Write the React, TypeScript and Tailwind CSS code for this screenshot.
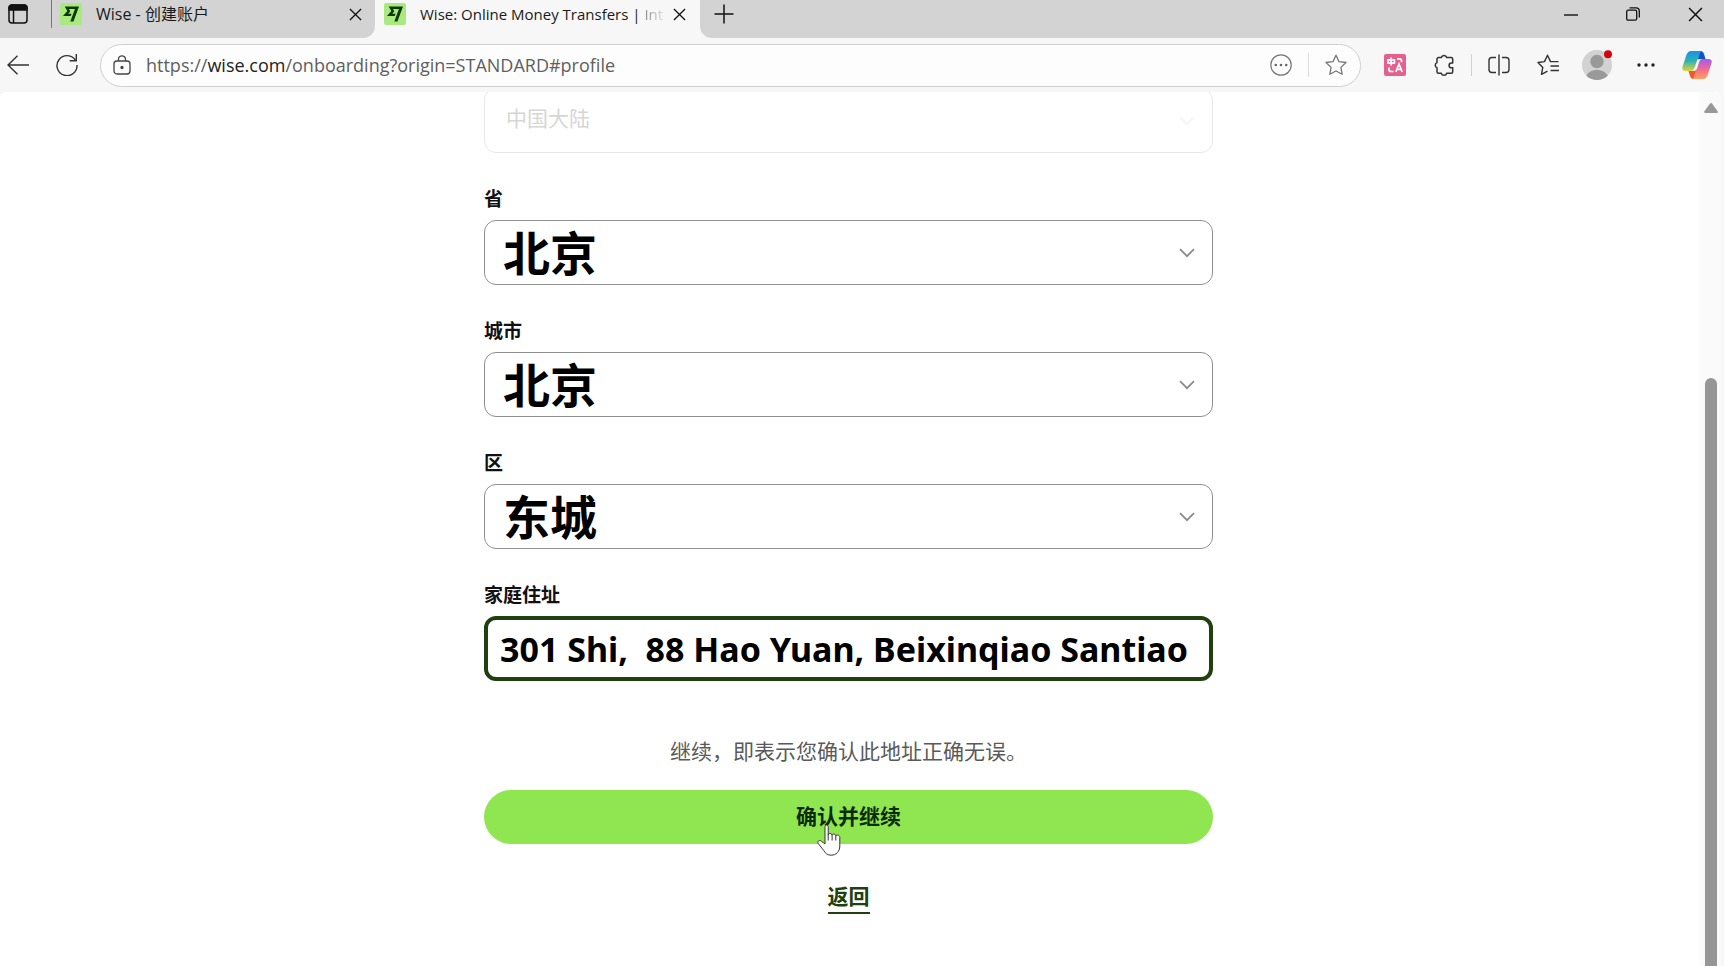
import type { ReactNode } from "react";

const WiseLogo = () => (
    <span className="flex h-[22px] w-[22px] shrink-0 items-center justify-center rounded-xs bg-[#a9e97f]">
        <svg viewBox="0 0 24 24" className="h-4 w-4" fill="#0d3a08">
            <path d="M6.488 7.469 0 15.05h11.585l1.301-3.576H7.922l3.033-3.507.01-.092L8.993 4.48h8.873l-6.878 18.925h4.706L24 .595H2.543l3.945 6.874Z" />
        </svg>
    </span>
);

const Cross = ({ size }: { size: string }) => (
    <svg viewBox="0 0 14 14" className={size} fill="none" stroke="#111" strokeWidth="1.4">
        <path d="M1 1l12 12M13 1L1 13" />
    </svg>
);

const Chevron = ({ className }: { className: string }) => (
    <svg viewBox="0 0 16 10" className={`h-[10px] w-4 ${className}`} fill="none" stroke="currentColor" strokeWidth="1.7">
        <path d="M1 1.2l7 7 7-7" />
    </svg>
);

const ToolButton = ({ label, children }: { label: string; children: ReactNode }) => (
    <button type="button" aria-label={label} className="relative flex h-10 w-12 shrink-0 items-center justify-center">
        {children}
    </button>
);

const TabStrip = () => (
    <div className="flex h-[38px] bg-[#f7f7f7] text-base text-[#1a1a1a]">
        <div className="flex w-[375px] shrink-0 rounded-br-xl bg-[#d3d3d3]">
            <div className="flex h-7 w-full items-center pl-2 pr-[13px]">
                <button type="button" aria-label="Tab actions">
                    <svg viewBox="0 0 20 20" className="h-5 w-5" fill="none" stroke="#111" strokeWidth="1.5">
                        <rect x="1" y="1" width="18" height="18" rx="3" />
                        <path d="M1 6V4a3 3 0 013-3h12a3 3 0 013 3v2z" fill="#111" />
                        <path d="M5.5 6v13" />
                    </svg>
                </button>
                <span className="ml-[23px] h-7 w-px bg-[#777]" />
                <button type="button" className="ml-2 flex flex-1 items-center gap-3.5 text-left">
                    <WiseLogo />
                    Wise - 创建账户
                </button>
                <button type="button" aria-label="Close tab">
                    <Cross size="h-[13px] w-[13px]" />
                </button>
            </div>
        </div>
        <div className="flex h-7 w-[325px] shrink-0 items-center pl-[9px] pr-[14px]">
            <button type="button" className="flex flex-1 items-center gap-3.5 text-left text-[15px]">
                <WiseLogo />
                <span className="whitespace-nowrap">
                    Wise: Online Money Transfers |{" "}
                    <span className="bg-linear-to-r from-[#8a8a8a] to-[#dedede] bg-clip-text text-transparent">Int</span>
                </span>
            </button>
            <button type="button" aria-label="Close tab">
                <Cross size="h-[13px] w-[13px]" />
            </button>
        </div>
        <div className="min-w-0 flex-1 rounded-bl-xl bg-[#d3d3d3]">
            <div className="flex h-7 items-center pl-[14px] pr-[21px]">
                <button type="button" aria-label="New tab">
                    <svg viewBox="0 0 20 20" className="h-5 w-5" fill="none" stroke="#111" strokeWidth="1.5">
                        <path d="M10 .5v19M.5 10h19" />
                    </svg>
                </button>
                <div className="ml-auto flex items-center gap-12">
                    <button type="button" aria-label="Minimize">
                        <svg viewBox="0 0 14 14" className="h-[14px] w-[14px]" stroke="#111" strokeWidth="1.4">
                            <path d="M0 8h14" />
                        </svg>
                    </button>
                    <button type="button" aria-label="Restore">
                        <svg viewBox="0 0 14 14" className="h-[14px] w-[14px]" fill="none" stroke="#111" strokeWidth="1.3">
                            <rect x=".7" y="3.2" width="10" height="10" rx="1.5" />
                            <path d="M3.5.8H10a3.3 3.3 0 013.3 3.3v6.4" />
                        </svg>
                    </button>
                    <button type="button" aria-label="Close window">
                        <Cross size="h-[15px] w-[15px]" />
                    </button>
                </div>
            </div>
        </div>
    </div>
);

const STAR = "M11 1.2l3 6.4 7 .9-5.1 4.9 1.3 6.9L11 17l-6.2 3.3 1.3-6.9L1 8.5l7-.9z";

const Toolbar = () => (
    <div className="flex h-[54px] items-center bg-[#f7f7f7] pl-[7px] pr-[3px]">
        <button type="button" aria-label="Back">
            <svg viewBox="0 0 22 20" className="h-5 w-[22px]" fill="none" stroke="#333" strokeWidth="1.4">
                <path d="M10.5.8L1 10l9.5 9.2M1 10h21" />
            </svg>
        </button>
        <button type="button" aria-label="Refresh" className="ml-[27px]">
            <svg viewBox="0 0 22 22" className="h-[22px] w-[22px]" fill="none" stroke="#333" strokeWidth="1.4">
                <path d="M19.6 6.5A10 10 0 1021 11" />
                <path d="M20.3 0v6.7h-6.6" />
            </svg>
        </button>
        <div className="ml-[22px] flex h-[43px] min-w-0 flex-1 items-center rounded-full border border-[#cfcfcf] bg-[#fdfdfd] pl-3 pr-[13px]">
            <svg viewBox="0 0 18 20" className="h-5 w-[18px] shrink-0" fill="none" stroke="#444" strokeWidth="1.3">
                <rect x="1" y="6" width="16" height="13" rx="3" />
                <path d="M5.5 6V4.3a3.5 3.5 0 017 0V6" />
                <circle cx="9" cy="12.5" r="1" fill="#444" />
            </svg>
            <button type="button" className="ml-[15px] min-w-0 flex-1 truncate text-left text-lg text-[#5f5f5f]">
                https://<span className="text-[#222]">wise.com</span>/onboarding?origin=STANDARD#profile
            </button>
            <button type="button" aria-label="More page actions">
                <svg viewBox="0 0 22 22" className="h-[22px] w-[22px]" fill="none" stroke="#777" strokeWidth="1.2">
                    <circle cx="11" cy="11" r="10.2" />
                    <g fill="#666" stroke="none">
                        <circle cx="5.8" cy="11" r="1.3" />
                        <circle cx="11" cy="11" r="1.3" />
                        <circle cx="16.2" cy="11" r="1.3" />
                    </g>
                </svg>
            </button>
            <span className="mx-4 h-6 w-px bg-[#dcdcdc]" />
            <button type="button" aria-label="Add to favorites">
                <svg viewBox="0 0 22 22" className="h-[22px] w-[22px]" fill="none" stroke="#777" strokeWidth="1.3" strokeLinejoin="round">
                    <path d={STAR} />
                </svg>
            </button>
        </div>
        <div className="ml-[10px] flex shrink-0 items-center gap-px">
            <ToolButton label="Translate">
                <svg viewBox="0 0 22 22" className="h-[22px] w-[22px]" fill="none" stroke="#fff" strokeWidth="1.7">
                    <rect width="22" height="22" rx="2" fill="#e4608f" stroke="none" />
                    <path d="M4 5.8h6.4v3.4H4zM7.2 3.5v8M13 4.8h2.5a2 2 0 012 2v1.5M5 13.5v2a2 2 0 002 2h2.5" />
                    <path d="M11.8 18l3.2-8 3.2 8M13 15.3h4" />
                </svg>
            </ToolButton>
            <ToolButton label="Extensions">
                <svg viewBox="0 0 22 24" className="h-6 w-[22px]" fill="none" stroke="#333" strokeWidth="1.5" strokeLinejoin="round">
                    <path d="M8.3 4.5a2.8 2.8 0 015.4 0h4.5a1.5 1.5 0 011.5 1.5v4h-1.2a2.4 2.4 0 000 4.8h1.2v4a1.5 1.5 0 01-1.5 1.5h-4.5a2.8 2.8 0 01-5.4 0H5.5A1.5 1.5 0 014 18.8v-4a2.8 2.8 0 010-5.2V6a1.5 1.5 0 011.5-1.5z" />
                </svg>
            </ToolButton>
            <span className="mx-0.5 h-[22px] w-px bg-[#d0d0d0]" />
            <ToolButton label="Split screen">
                <svg viewBox="0 0 22 22" className="h-[22px] w-[22px]" fill="none" stroke="#333" strokeWidth="1.4">
                    <path d="M8 3.5H4a3 3 0 00-3 3v9a3 3 0 003 3h4M14 3.5h4a3 3 0 013 3v9a3 3 0 01-3 3h-4M11 .5v21" />
                </svg>
            </ToolButton>
            <ToolButton label="Favorites">
                <svg viewBox="0 0 22 22" className="h-[22px] w-[22px]" fill="none" stroke="#333" strokeWidth="1.4" strokeLinejoin="round">
                    <path d="M10.5 17.1l-6 3.2 1.3-6.9L1 8.5l6.5-.9 3-6.4 3 6.4h8M13.5 12H22M13.5 16.5H22" />
                </svg>
            </ToolButton>
            <ToolButton label="Profile">
                <svg viewBox="0 0 30 30" className="h-[30px] w-[30px]">
                    <circle cx="15" cy="15" r="15" fill="#d2d2d2" />
                    <circle cx="15" cy="11.5" r="6.7" fill="#999" />
                    <path d="M4.2 25.4a13 13 0 0121.6 0A15 15 0 014.2 25.4z" fill="#999" />
                    <circle cx="26" cy="4.3" r="4" fill="#d9000f" />
                </svg>
            </ToolButton>
            <ToolButton label="Settings and more">
                <svg viewBox="0 0 20 4" className="h-1 w-5" fill="#222">
                    <circle cx="3" cy="2" r="1.7" />
                    <circle cx="10" cy="2" r="1.7" />
                    <circle cx="17" cy="2" r="1.7" />
                </svg>
            </ToolButton>
            <span className="w-px" />
            <ToolButton label="Copilot">
                <svg viewBox="0 0 30 28" className="h-7 w-[30px]">
                    <defs>
                        <linearGradient id="cool" x1="0" y1="0" x2="0" y2="1">
                            <stop offset="0" stopColor="#1b8fe8" />
                            <stop offset=".5" stopColor="#2cb3b8" />
                            <stop offset="1" stopColor="#e4d52c" />
                        </linearGradient>
                        <linearGradient id="warm" x1="0" y1="0" x2="0" y2="1">
                            <stop offset="0" stopColor="#a25be8" />
                            <stop offset=".5" stopColor="#f06a93" />
                            <stop offset="1" stopColor="#fba25c" />
                        </linearGradient>
                    </defs>
                    <path d="M14 0h4.5c2 0 3 1.3 3.6 3.2L23.5 8H20c-2.5 0-3.5 1.5-4.2 3.5L12 8z" fill="#1550c8" />
                    <path d="M16 28h-4.5c-2 0-3-1.3-3.6-3.2L6.5 20H10c2.5 0 3.5-1.5 4.2-3.5L18 20z" fill="#ee5a34" />
                    <path d="M18.5 0H9.2C6.5 0 5 2 4 5L.6 15.5C-.4 18.5 1 20 3.5 20H10c2 0 3-1.2 3.6-3.2l3.8-13C18 1.8 18.5.5 20 .2z" fill="url(#cool)" />
                    <path d="M11.5 28h9.3c2.7 0 4.2-2 5.2-5l3.4-10.5c1-3-.4-4.5-2.9-4.5H20c-2 0-3 1.2-3.6 3.2l-3.8 13c-.6 2-1.1 3.3-2.6 3.6z" fill="url(#warm)" />
                    <path d="M15.5 8.2H20c-1.7.4-2.6 1.7-3.1 3.3l-1.6 5.2c-.6 1.9-1.5 3.100-3.300 3.100H9.600c1.700-.3 2.400-1.500 2.900-3z" fill="#f7f7f7" />
                </svg>
            </ToolButton>
        </div>
    </div>
);

interface SelectFieldProps {
    id: string;
    label: string;
    value: string;
}

const SelectField = ({ id, label, value }: SelectFieldProps) => (
    <div>
        <label htmlFor={id} className="mb-2.5 block text-[19px] font-bold leading-6 text-[#111]">
            {label}
        </label>
        <div className="relative">
            <select
                id={id}
                className="block h-[65px] w-full appearance-none rounded-xl border border-[#8f8f8f] bg-white px-[18px] pb-1.5 text-[47px] font-bold leading-[60px] text-black"
            >
                <option>{value}</option>
            </select>
            <Chevron className="pointer-events-none absolute right-[18px] top-1/2 -translate-y-1/2 text-[#8a8a8a]" />
        </div>
    </div>
);

const AddressForm = () => (
    <form className="mx-auto -mt-1 flex w-full max-w-[729px] flex-col gap-[33px]">
        <div className="relative">
            <select
                aria-label="国家/地区"
                disabled
                className="block h-[65px] w-full appearance-none rounded-xl border border-[#e8e8e8] bg-white px-[21px] pb-1.5 text-[21px] text-[#d6d6d6] opacity-100"
            >
                <option>中国大陆</option>
            </select>
            <Chevron className="pointer-events-none absolute right-[18px] top-1/2 -translate-y-1/2 text-[#f5f5f5]" />
        </div>
        <SelectField id="province" label="省" value="北京" />
        <SelectField id="city" label="城市" value="北京" />
        <SelectField id="district" label="区" value="东城" />
        <div>
            <label htmlFor="address" className="mb-2.5 block text-[19px] font-bold leading-6 text-[#111]">
                家庭住址
            </label>
            <input
                id="address"
                type="text"
                defaultValue="301 Shi,  88 Hao Yuan, Beixinqiao Santiao"
                className="block h-[65px] w-full rounded-xl border-4 border-[#20400f] bg-white px-3 font-['Noto_Sans','Noto_Sans_CJK_SC',sans-serif] text-[34px] font-bold text-black outline-none"
            />
        </div>
        <div className="mt-5 text-center text-[21px]">
            <p className="mb-6 leading-8 text-[#5a5a5a]">继续，即表示您确认此地址正确无误。</p>
            <button type="button" className="relative h-[54px] w-full rounded-full bg-[#8fe650] pb-0.5 font-bold text-[#0d2a06]">
                确认并继续
                <svg viewBox="0 0 24 32" className="absolute left-[333px] top-[34px] h-8 w-6" fill="#fff" stroke="#333" strokeWidth="1" strokeLinejoin="round">
                    <path d="M8 20V3.2C8 .3 11.2.3 11.2 3.2V11c0-2 3.6-2.3 3.9.2.5-1.7 3.5-1.6 3.7.7.7-1.4 4-1.2 4 1.5V22c0 5.5-3.6 9.2-8.6 9.2-3.7 0-5.6-1.5-7.3-4.5L1.2 19.5c-1.2-2.4 1.2-4 3.2-2.3z" />
                    <path d="M11.2 11v5.5M15.1 11.2v5.3M18.8 11.9v4.6" fill="none" />
                </svg>
            </button>
            <a href="#back" className="mt-9 inline-block border-b-2 border-[#20400f] pb-0.5 font-bold leading-[30px] text-[#20400f]">
                返回
            </a>
        </div>
    </form>
);

export default function App() {
    return (
        <div className="flex h-screen flex-col overflow-hidden bg-[#f7f7f7] font-['Open_Sans','Noto_Sans_CJK_SC',sans-serif]">
            <TabStrip />
            <Toolbar />
            <div className="mr-[3px] flex min-h-0 flex-1 overflow-hidden rounded-t-md bg-white">
                <main className="min-w-0 flex-1 font-['Noto_Sans_CJK_SC',sans-serif]">
                    <AddressForm />
                </main>
                <div className="flex w-6 flex-col items-center bg-linear-to-r from-white to-[#fafafa] to-20% pl-1 pt-[11px]">
                    <svg viewBox="0 0 14 10" className="h-[10px] w-[14px]" fill="#999">
                        <path d="M6 .6a1.3 1.3 0 012 0l5.6 7.7c.5.8 0 1.7-1 1.7H1.4c-1 0-1.5-.9-1-1.7z" />
                    </svg>
                    <div className="mt-[265px] w-3 flex-1 rounded-t-full bg-[#969696]" />
                </div>
            </div>
        </div>
    );
}
